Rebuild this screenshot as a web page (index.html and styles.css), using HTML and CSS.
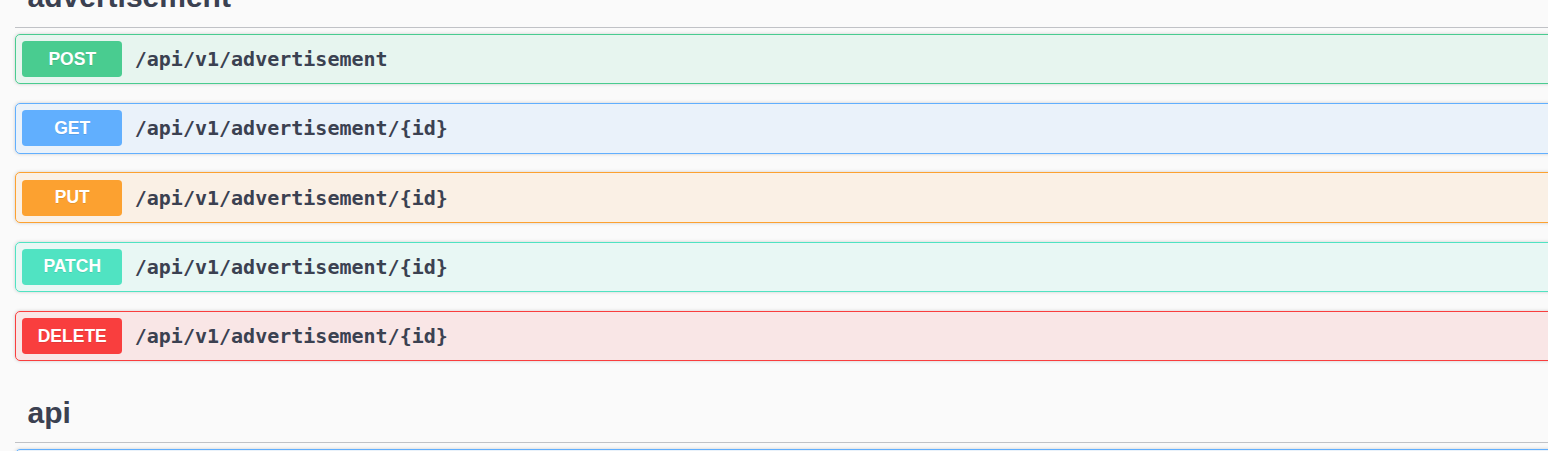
FILE: index.html
```html
<!DOCTYPE html>
<html>
<head>
<meta charset="utf-8">
<link rel="stylesheet" href="styles.css">
</head>
<body>
<div class="page">
  <section class="tag-section">
    <h3 class="tag"><span>advertisement</span></h3>
    <div class="ops">
      <div class="op post"><div class="summary"><span class="method">POST</span><span class="path">/api/v1/advertisement</span></div></div>
      <div class="op get"><div class="summary"><span class="method">GET</span><span class="path">/api/v1/advertisement/{id}</span></div></div>
      <div class="op put"><div class="summary"><span class="method">PUT</span><span class="path">/api/v1/advertisement/{id}</span></div></div>
      <div class="op patch"><div class="summary"><span class="method">PATCH</span><span class="path">/api/v1/advertisement/{id}</span></div></div>
      <div class="op delete"><div class="summary"><span class="method">DELETE</span><span class="path">/api/v1/advertisement/{id}</span></div></div>
    </div>
  </section>
  <section class="tag-section">
    <h3 class="tag"><span>api</span></h3>
    <div class="ops">
      <div class="op get"><div class="summary"><span class="method">GET</span><span class="path">/api/v1/health</span></div></div>
    </div>
  </section>
</div>
</body>
</html>
```

FILE: styles.css
```css
html, body {
  margin: 0;
  padding: 0;
  background: #fafafa;
  overflow: hidden;
}
body {
  font-family: "Liberation Sans", Arial, sans-serif;
  color: #3b4151;
}
.page {
  margin-top: -32.5px;
  padding-left: 15px;
  margin-right: -30px;
}
.tag-section {
  display: flex;
  flex-direction: column;
}
.tag {
  display: flex;
  align-items: center;
  margin: 0 0 6.25px;
  padding: 12.5px 25px 12.5px 12.5px;
  border-bottom: 1px solid rgba(59, 65, 81, 0.3);
  font-size: 30px;
  font-weight: 700;
  line-height: normal;
  color: #3b4151;
}
.ops {
  display: flex;
  flex-direction: column;
  padding-bottom: 3px;
}
.op {
  margin: 0 0 18.75px;
  border: 1px solid #000;
  border-radius: 5px;
  box-shadow: 0 0 3.75px rgba(0, 0, 0, 0.19);
}
.summary {
  display: flex;
  align-items: center;
  padding: 6.25px;
}
.method {
  min-width: 100px;
  padding: 7.5px 0;
  border-radius: 3.75px;
  text-align: center;
  font-family: "Liberation Sans", Arial, sans-serif;
  font-size: 17.5px;
  font-weight: 700;
  line-height: 21px;
  color: #fff;
  text-shadow: 0 1px 0 rgba(0, 0, 0, 0.1);
}
.path {
  padding: 0 12.5px;
  font-family: "DejaVu Sans Mono", monospace;
  font-size: 20px;
  font-weight: 700;
  color: #3b4151;
}
.post { border-color: #49cc90; background: rgba(73, 204, 144, 0.1); }
.post .method { background: #49cc90; }
.get { border-color: #61affe; background: rgba(97, 175, 254, 0.1); }
.get .method { background: #61affe; }
.put { border-color: #fca130; background: rgba(252, 161, 48, 0.1); }
.put .method { background: #fca130; }
.patch { border-color: #50e3c2; background: rgba(80, 227, 194, 0.1); }
.patch .method { background: #50e3c2; }
.delete { border-color: #f93e3e; background: rgba(249, 62, 62, 0.1); }
.delete .method { background: #f93e3e; }
```
